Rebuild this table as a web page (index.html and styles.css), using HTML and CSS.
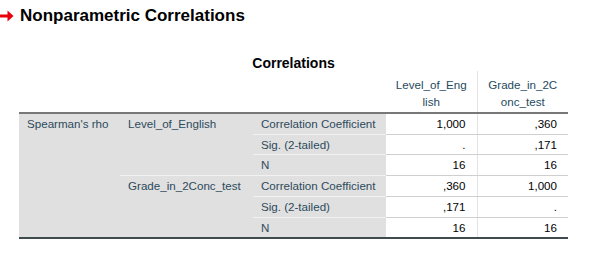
FILE: index.html
```html
<!DOCTYPE html>
<html>
<head>
<meta charset="utf-8">
<link rel="stylesheet" href="styles.css">
</head>
<body>
<div class="title">
  <svg class="arrow" width="14" height="12" viewBox="0 0 14 12"><path d="M0 4.5H7.5V0.5L13.5 6L7.5 11.5V7.5H0Z" fill="#e8000b"/></svg>
  <span class="title-text">Nonparametric Correlations</span>
</div>
<div class="caption">Correlations</div>
<table class="corr">
  <colgroup>
    <col class="c-a"><col class="c-b"><col class="c-c"><col class="c-d"><col class="c-e">
  </colgroup>
  <thead>
    <tr>
      <th class="blank" colspan="3"></th>
      <th class="colhead divider">Level_of_Eng<br>lish</th>
      <th class="colhead">Grade_in_2C<br>onc_test</th>
    </tr>
  </thead>
  <tbody>
    <tr>
      <td class="lab group" rowspan="6">Spearman's rho</td>
      <td class="lab var sep" rowspan="3">Level_of_English</td>
      <td class="lab stat">Correlation Coefficient</td>
      <td class="num divider">1,000</td>
      <td class="num">,360</td>
    </tr>
    <tr>
      <td class="lab stat">Sig. (2-tailed)</td>
      <td class="num divider">.</td>
      <td class="num">,171</td>
    </tr>
    <tr>
      <td class="lab stat">N</td>
      <td class="num divider">16</td>
      <td class="num">16</td>
    </tr>
    <tr>
      <td class="lab var" rowspan="3">Grade_in_2Conc_test</td>
      <td class="lab stat">Correlation Coefficient</td>
      <td class="num divider">,360</td>
      <td class="num">1,000</td>
    </tr>
    <tr>
      <td class="lab stat">Sig. (2-tailed)</td>
      <td class="num divider">,171</td>
      <td class="num">.</td>
    </tr>
    <tr class="last">
      <td class="lab stat">N</td>
      <td class="num divider">16</td>
      <td class="num">16</td>
    </tr>
  </tbody>
</table>
</body>
</html>
```

FILE: styles.css
```css
html, body {
  margin: 0;
  padding: 0;
  background: #ffffff;
}

body {
  font-family: "Liberation Sans", Arial, sans-serif;
}

.title {
  display: flex;
  align-items: center;
  gap: 6px;
  height: 20px;
  margin-top: 6px;
}

.arrow {
  display: block;
  flex: none;
}

.title-text {
  font-size: 17px;
  font-weight: bold;
  line-height: 20px;
  color: #000000;
}

.caption {
  margin-top: 29px;
  width: 549px;
  margin-left: 19px;
  text-align: center;
  font-size: 14px;
  font-weight: bold;
  line-height: 16px;
  color: #010205;
}

.corr {
  margin-left: 19px;
  border-collapse: collapse;
  table-layout: fixed;
  width: 549px;
  font-size: 11.6px;
}

.c-a { width: 101px; }
.c-b { width: 133px; }
.c-c { width: 133px; }
.c-d { width: 91px; }
.c-e { width: 91px; }

.corr th,
.corr td {
  padding: 0;
  font-weight: normal;
}

.corr .colhead {
  color: #264a60;
  text-align: center;
  line-height: 17px;
  padding: 5px 0 2px 0;
  vertical-align: bottom;
}

.corr tbody {
  border-top: 2px solid #787878;
  border-bottom: 2px solid #3f4a4e;
}

.corr tbody td {
  height: 19.7px;
  line-height: 19.7px;
  white-space: nowrap;
}

.corr .lab {
  background: #e0e0e0;
  color: #2c4a5c;
  padding-left: 8px;
  vertical-align: top;
}

.corr .var.sep {
  border-bottom: 1px solid #f2f2f2;
}

.corr .stat {
  border-bottom: 1px solid #f2f2f2;
}

.corr .num {
  color: #010205;
  text-align: right;
  padding-right: 11px;
  border-bottom: 1px solid #cfcfcf;
  vertical-align: middle;
}

.corr .divider {
  border-right: 1px solid #e4e4e4;
}

.corr .last td {
  border-bottom: none;
}
```
